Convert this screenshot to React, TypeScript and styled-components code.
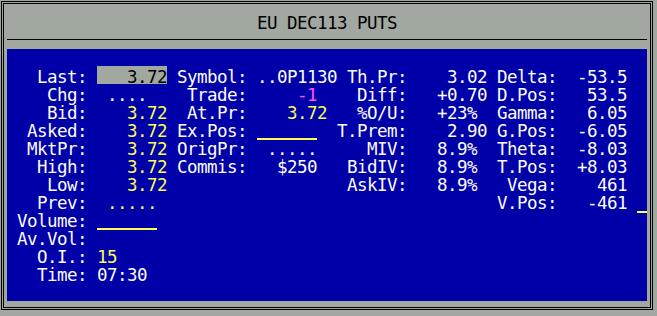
import React from 'react';
import styled, { createGlobalStyle } from 'styled-components';

const GREY = '#a0a8a0';
const BLUE = '#0000a8';
const WHITE = '#fcfcfc';
const YELLOW = '#fcfc54';
const MAGENTA = '#fc54fc';
const MONO = '"DejaVu Sans Mono", "Liberation Mono", monospace';

const GlobalStyle = createGlobalStyle`
  html, body { margin: 0; padding: 0; background: ${GREY}; }
  body { width: 657px; height: 316px; overflow: hidden; }
`;

const Window = styled.div`
  margin: 1px 0 0 1px;
  width: 652px;
  box-sizing: border-box;
  border: 1px solid #000;
  padding: 1px;
`;

const Inner = styled.div`
  border: 1px solid #000;
  padding: 0 3px 6px;
`;

const TitleBar = styled.div`
  height: 36px;
  box-sizing: border-box;
  padding-top: 4px;
  line-height: 31px;
  text-align: center;
  border-bottom: 1px solid #000;
  margin-bottom: 9px;
  font-family: ${MONO};
  font-size: 17.5px;
  letter-spacing: -0.54px;
  color: #000;
  white-space: pre;
`;

const Panel = styled.div`
  height: 252px;
  box-sizing: border-box;
  background: ${BLUE};
  padding: 17px 0 0 10px;
  display: flex;
  align-items: flex-start;
  font-family: ${MONO};
  font-size: 17.5px;
  letter-spacing: -0.54px;
`;

const Group = styled.div<{ $label: number; $value: number }>`
  display: grid;
  grid-template-columns: ${(p) => p.$label}px ${(p) => p.$value}px;
  grid-auto-rows: 18px;
  align-content: start;
`;

const Label = styled.div`
  text-align: right;
  color: ${WHITE};
  white-space: pre;
  line-height: 22px;
  height: 18px;
`;

type Tone = 'white' | 'yellow' | 'magenta';
const toneColor = (t: Tone) => (t === 'yellow' ? YELLOW : t === 'magenta' ? MAGENTA : WHITE);

const Value = styled.div<{ $tone?: Tone; $pad: number }>`
  position: relative;
  padding-left: ${(p) => p.$pad}px;
  color: ${(p) => toneColor(p.$tone || 'white')};
  white-space: pre;
  line-height: 22px;
  height: 18px;
`;

const Highlight = styled.span`
  display: block;
  height: 18px;
  background: ${GREY};
  color: #000;
`;

const Blank = styled.span`
  display: block;
  width: 60px;
  height: 18px;
  border-bottom: 2px solid ${YELLOW};
`;

const Cursor = styled.span`
  position: absolute;
  left: 80px;
  top: 19px;
  width: 10px;
  height: 2px;
  background: ${YELLOW};
`;

type Field = {
  label: string;
  text?: string;
  tone?: Tone;
  kind?: 'box' | 'blank' | 'cursor';
};

const col1: Field[] = [
  { label: 'Last:', text: '   3.72', kind: 'box' },
  { label: 'Chg:', text: ' ....' },
  { label: 'Bid:', text: '   3.72', tone: 'yellow' },
  { label: 'Asked:', text: '   3.72', tone: 'yellow' },
  { label: 'MktPr:', text: '   3.72', tone: 'yellow' },
  { label: 'High:', text: '   3.72', tone: 'yellow' },
  { label: 'Low:', text: '   3.72', tone: 'yellow' },
  { label: 'Prev:', text: ' .....', tone: 'yellow' },
  { label: 'Volume:', kind: 'blank' },
  { label: 'Av.Vol:', text: '' },
  { label: 'O.I.:', text: '15', tone: 'yellow' },
  { label: 'Time:', text: '07:30' },
];

const col2: Field[] = [
  { label: 'Symbol:', text: '..0P1130' },
  { label: 'Trade:', text: '    -1', tone: 'magenta' },
  { label: 'At.Pr:', text: '   3.72', tone: 'yellow' },
  { label: 'Ex.Pos:', kind: 'blank' },
  { label: 'OrigPr:', text: ' .....' },
  { label: 'Commis:', text: '  $250' },
];

const col3: Field[] = [
  { label: 'Th.Pr:', text: '   3.02' },
  { label: 'Diff:', text: '  +0.70' },
  { label: '%O/U:', text: '  +23%' },
  { label: 'T.Prem:', text: '   2.90' },
  { label: 'MIV:', text: '  8.9%' },
  { label: 'BidIV:', text: '  8.9%' },
  { label: 'AskIV:', text: '  8.9%' },
];

const col4: Field[] = [
  { label: 'Delta:', text: '  -53.5' },
  { label: 'D.Pos:', text: '   53.5' },
  { label: 'Gamma:', text: '   6.05' },
  { label: 'G.Pos:', text: '  -6.05' },
  { label: 'Theta:', text: '  -8.03' },
  { label: 'T.Pos:', text: '  +8.03' },
  { label: 'Vega:', text: '    461' },
  { label: 'V.Pos:', text: '   -461', kind: 'cursor' },
];

const Column: React.FC<{ fields: Field[]; label: number; value: number; pad: number }> = ({
  fields,
  label,
  value,
  pad,
}) => (
  <Group $label={label} $value={value}>
    {fields.map((f) => (
      <React.Fragment key={f.label}>
        <Label>{f.label}</Label>
        <Value $tone={f.tone} $pad={pad}>
          {f.kind === 'box' ? (
            <Highlight>{f.text}</Highlight>
          ) : f.kind === 'blank' ? (
            <Blank />
          ) : (
            f.text
          )}
          {f.kind === 'cursor' && <Cursor />}
        </Value>
      </React.Fragment>
    ))}
  </Group>
);

export default function App() {
  return (
    <>
      <GlobalStyle />
      <Window>
        <Inner>
          <TitleBar>EU DEC113 PUTS</TitleBar>
          <Panel>
            <Column fields={col1} label={70} value={80} pad={10} />
            <Column fields={col2} label={80} value={90} pad={10} />
            <Column fields={col3} label={70} value={80} pad={10} />
            <Column fields={col4} label={70} value={70} pad={0} />
          </Panel>
        </Inner>
      </Window>
    </>
  );
}
